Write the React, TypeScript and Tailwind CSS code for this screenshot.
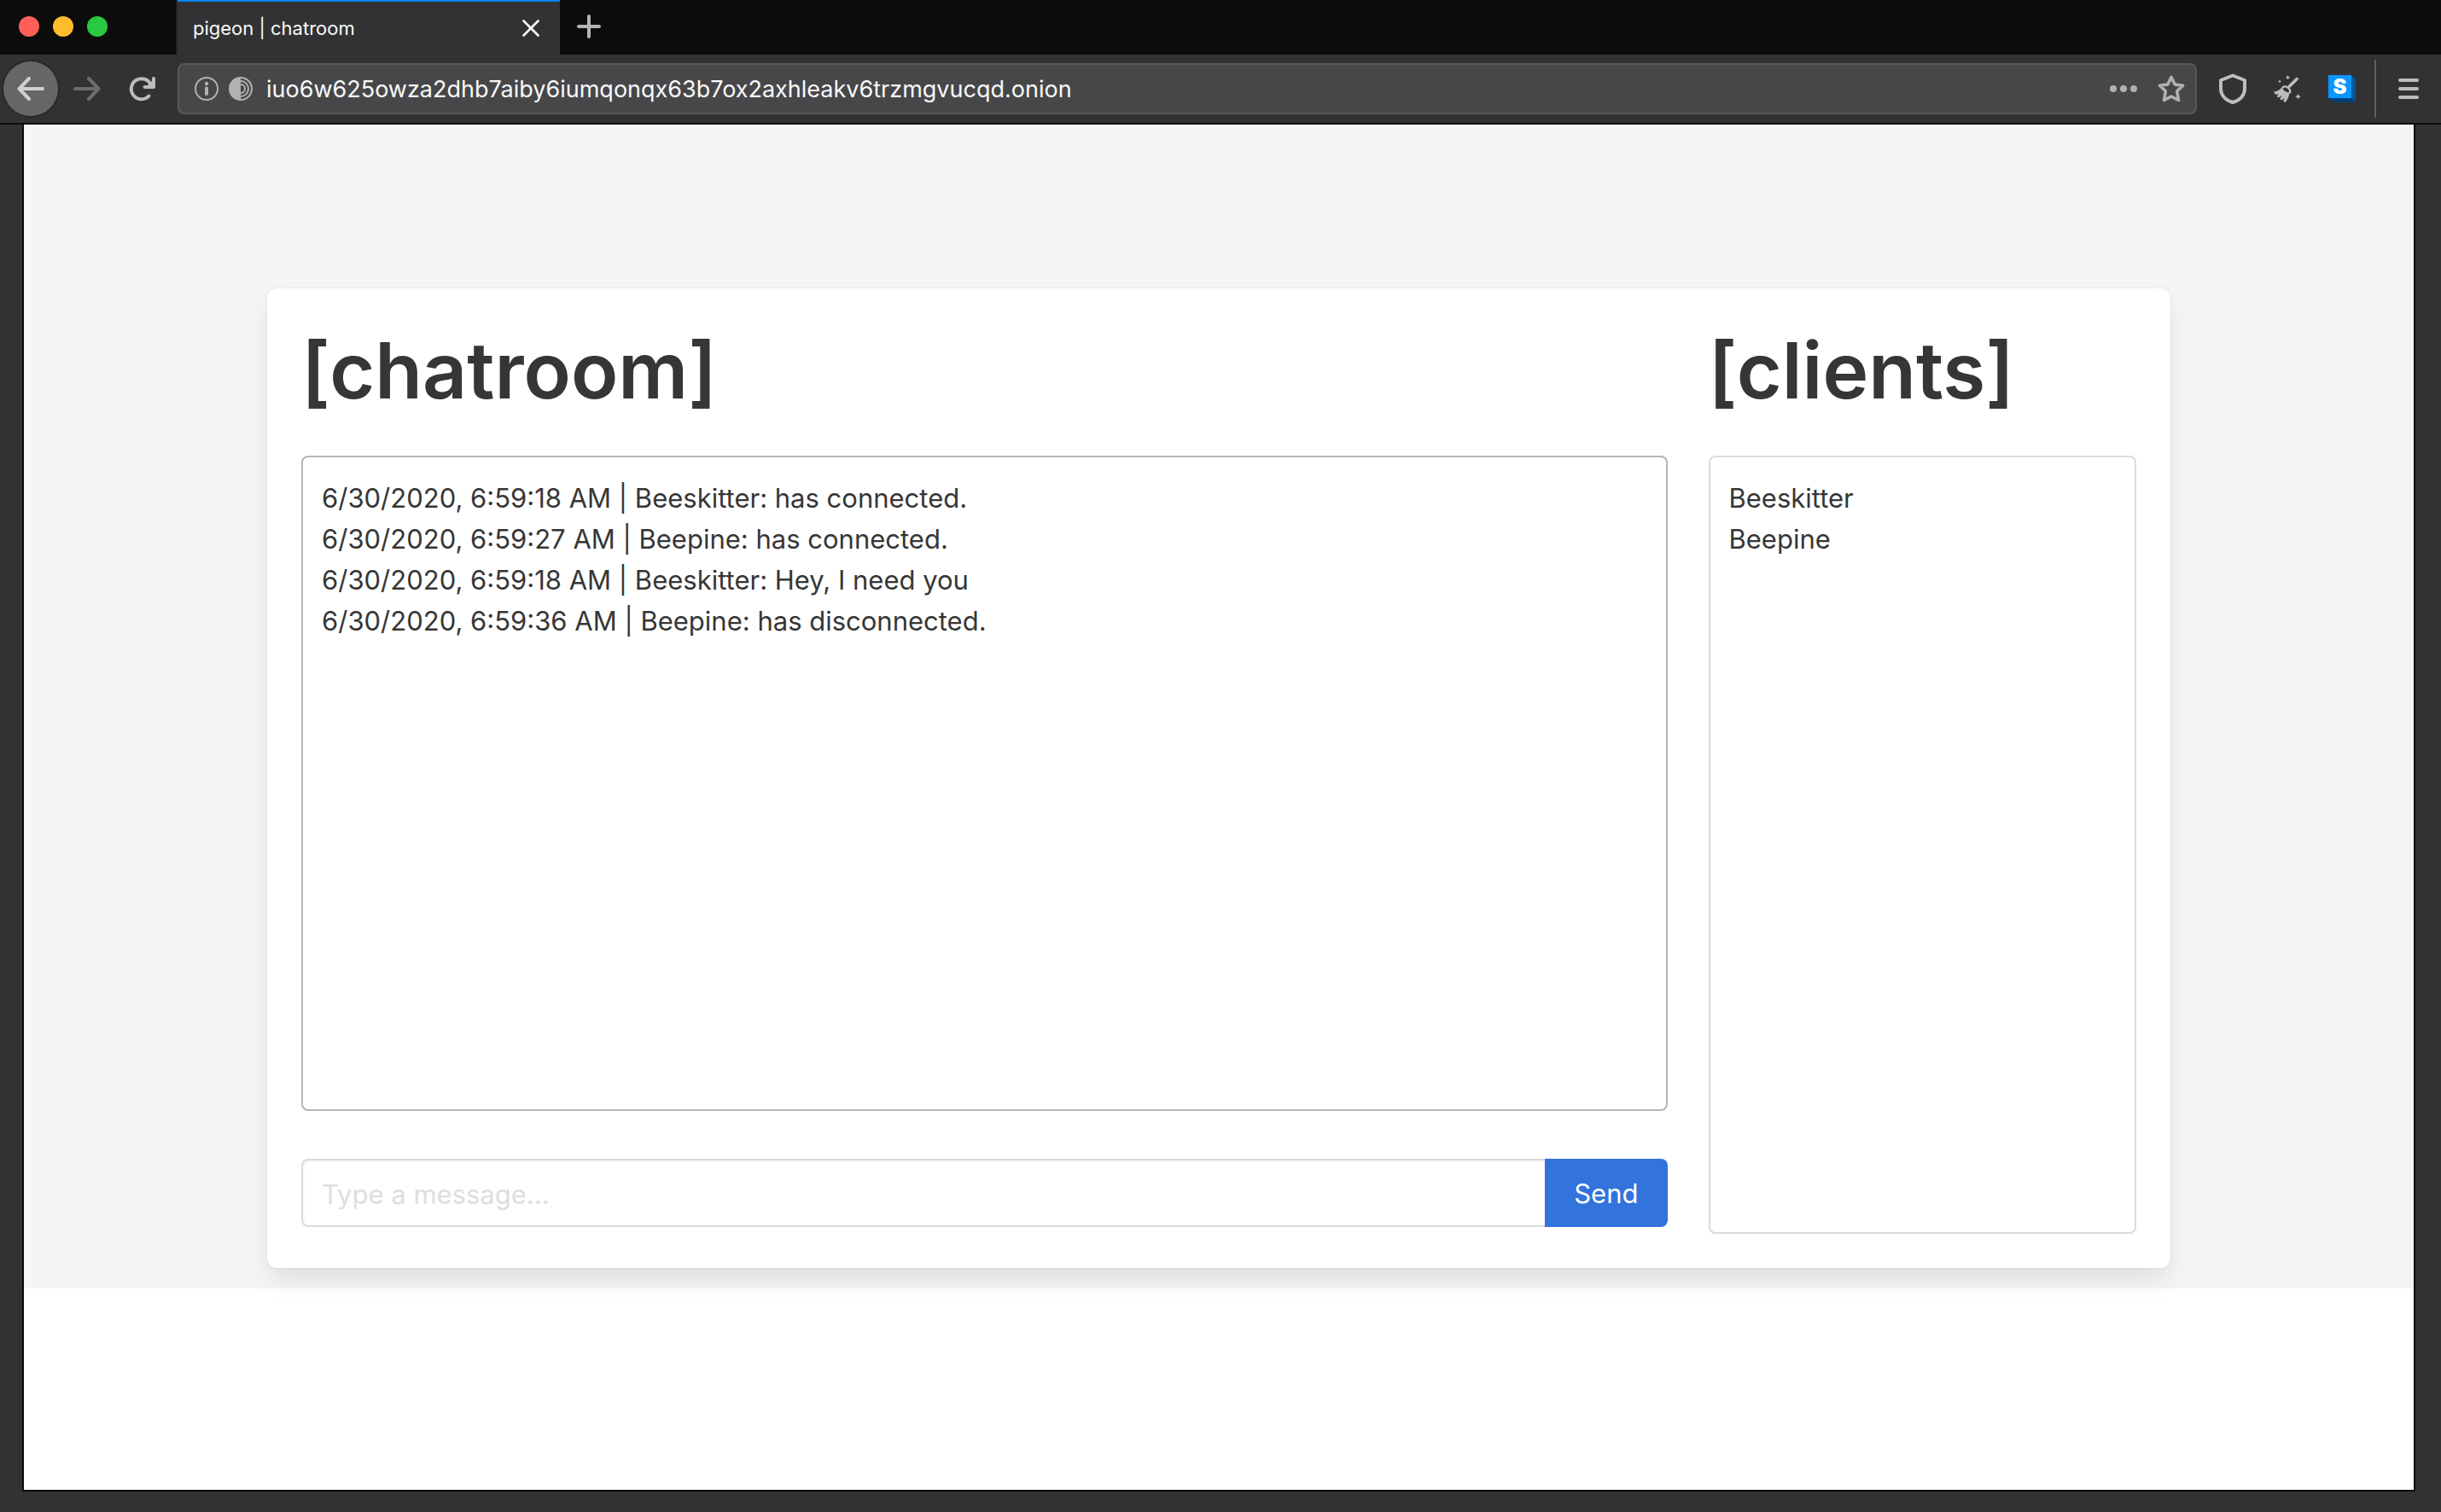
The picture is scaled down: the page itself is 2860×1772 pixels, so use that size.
import { useState } from "react";

const MESSAGES = [
  "6/30/2020, 6:59:18 AM | Beeskitter: has connected.",
  "6/30/2020, 6:59:27 AM | Beepine: has connected.",
  "6/30/2020, 6:59:18 AM | Beeskitter: Hey, I need you",
  "6/30/2020, 6:59:36 AM | Beepine: has disconnected.",
];

const CLIENTS = ["Beeskitter", "Beepine"];

function TabStrip() {
  return (
    <div className="flex h-16 items-stretch bg-[#0c0c0d]">
      <div className="flex w-52 shrink-0 items-center gap-4 border-r-2 border-[#232325] pb-0.5 pl-[22px]">
        <button type="button" aria-label="Close window" className="size-6 rounded-full bg-[#ff5f57]" />
        <button type="button" aria-label="Minimize window" className="size-6 rounded-full bg-[#ffbd2e]" />
        <button type="button" aria-label="Zoom window" className="size-6 rounded-full bg-[#28c940]" />
      </div>
      <div className="flex w-[448px] shrink-0 items-center justify-between border-t-2 border-[#0a84ff] bg-[#323234] pr-6 pl-[18px]">
        <span className="text-[22px] leading-7 text-[#f9f9fa]">pigeon | chatroom</span>
        <button type="button" aria-label="Close tab">
          <svg className="size-5" viewBox="0 0 20 20" fill="none" stroke="#f9f9fa" strokeWidth="2.6" strokeLinecap="round">
            <path d="M1.5 1.5l17 17M18.5 1.5l-17 17" />
          </svg>
        </button>
      </div>
      <button type="button" aria-label="New tab" className="flex items-center pb-0.5 pl-5">
        <svg className="size-7" viewBox="0 0 28 28" fill="none" stroke="#b4b4b5" strokeWidth="4" strokeLinecap="round">
          <path d="M14 2v24M2 14h24" />
        </svg>
      </button>
    </div>
  );
}

function OnionIcon() {
  return (
    <svg className="size-7" viewBox="0 0 28 28" fill="none" stroke="#b1b1b3" strokeWidth="2">
      <path d="M14 0a14 14 0 0 0 0 28z" fill="#b1b1b3" stroke="none" />
      <path d="M14 1a13 13 0 0 1 0 26M14 5a9 9 0 0 1 0 18M14 9a5 5 0 0 1 0 10" />
    </svg>
  );
}

function BroomIcon() {
  return (
    <svg className="size-8" viewBox="0 0 32 32" fill="#bdbdbe">
      <path d="M27.200 4.500L18.500 13" stroke="#bdbdbe" strokeWidth="3.600" strokeLinecap="round" />
      <path d="M10.500 14.500c3.500-3 9.500 1 8.500 6" fill="none" stroke="#bdbdbe" strokeWidth="2.400" strokeLinecap="round" />
      <path d="M9.500 14.500q2.500 5.500 9 6c-.6 4.500-2 8-4.800 11.500l-2.500-1.400 1.600-3.800-3.600 2.600-2-1.600 2.600-4-4.400 2.600-1.800-1.600 2.400-2.600-4 .6L0 19.500c4-.6 7-2 9.500-5z" />
      <path d="M16.500 0l.9 1.900 1.900.9-1.900.9-.9 1.900-.9-1.900-1.900-.9 1.900-.9zM7 5.400l.7 1.300 1.300.7-1.300.7L7 9.400l-.7-1.300L5 7.400l1.300-.7zM28.600 22l1.100 2.100 2.200 1.100-2.200 1.100-1.100 2.100-1.100-2.100-2.200-1.100 2.200-1.100z" />
    </svg>
  );
}

function Toolbar() {
  return (
    <div className="flex h-[80px] items-center bg-[#323234] pl-1">
      <button type="button" aria-label="Back" className="flex size-16 shrink-0 items-center justify-center rounded-full bg-[#666667] ring-2 ring-[#29292a]">
        <svg className="size-8" viewBox="0 0 32 32" fill="none" stroke="#d0d0d1" strokeWidth="4" strokeLinecap="round" strokeLinejoin="round">
          <path d="M30 16H3M14 4L2.500 16L14 28" />
        </svg>
      </button>
      <button type="button" aria-label="Forward" className="ml-[18px] shrink-0">
        <svg className="size-8" viewBox="0 0 32 32" fill="none" stroke="#6c6c6e" strokeWidth="4" strokeLinecap="round" strokeLinejoin="round">
          <path d="M2 16h27M18 4l11.500 12L18 28" />
        </svg>
      </button>
      <button type="button" aria-label="Reload" className="ml-8 shrink-0">
        <svg className="size-8" viewBox="0 0 32 32" fill="none" stroke="#bdbdbe" strokeWidth="4" strokeLinecap="round" strokeLinejoin="round">
          <path d="M24.500 24.500A12 12 0 1 1 27 12" />
          <path d="M30 4v10H19.500" />
          <path d="M28 7v7h-7z" fill="#bdbdbe" stroke="none" />
        </svg>
      </button>
      <div className="ml-[26px] flex h-[60px] min-w-0 flex-1 items-center rounded-lg border-2 border-[#59595b] bg-[#474749] pr-3 pl-[18px]">
        <button type="button" aria-label="Site information" className="shrink-0">
          <svg className="size-7" viewBox="0 0 28 28" fill="none" stroke="#b1b1b3">
            <circle cx="14" cy="14" r="13" strokeWidth="2" />
            <path d="M14 13.500v6.500" strokeWidth="4" strokeLinecap="round" />
            <circle cx="14" cy="8" r="2.200" fill="#b1b1b3" stroke="none" />
          </svg>
        </button>
        <button type="button" aria-label="Onion circuit" className="ml-3 shrink-0">
          <OnionIcon />
        </button>
        <input
          type="text"
          aria-label="Address"
          defaultValue="iuo6w625owza2dhb7aiby6iumqonqx63b7ox2axhleakv6trzmgvucqd.onion"
          className="ml-4 h-10 min-w-0 flex-1 bg-transparent pt-0.5 text-[27px] text-[#f9f9fa] outline-none"
        />
        <button type="button" aria-label="Page actions" className="shrink-0">
          <svg className="size-8" viewBox="0 0 32 32" fill="#b1b1b3">
            <circle cx="4" cy="16" r="4" />
            <circle cx="16" cy="16" r="4" />
            <circle cx="28" cy="16" r="4" />
          </svg>
        </button>
        <button type="button" aria-label="Bookmark this page" className="ml-6 shrink-0">
          <svg className="size-8" viewBox="0 0 32 32" fill="none" stroke="#b1b1b3" strokeWidth="3.600" strokeLinejoin="round">
            <path d="M16 2.500l4.200 8.500 9.400 1.200-6.900 6.500 1.800 10.800L16 25l-8.500 4.500 1.800-10.800-6.900-6.500 9.400-1.200z" />
          </svg>
        </button>
      </div>
      <button type="button" aria-label="Security level" className="ml-6 shrink-0">
        <svg className="size-9" viewBox="0 0 36 36" fill="none" stroke="#bdbdbe" strokeWidth="4" strokeLinejoin="round">
          <path d="M18 2.500L32 8v10c0 8-6 13.500-14 16C10 31.500 4 26 4 18V8z" />
        </svg>
      </button>
      <button type="button" aria-label="New identity" className="ml-[30px] shrink-0">
        <BroomIcon />
      </button>
      <button type="button" aria-label="S extension" className="ml-8 shrink-0">
        <span className="relative block size-8">
          <svg className="size-8" viewBox="0 0 32 32">
            <path d="M27 0l5 5v27l-5-5z" fill="#005a9e" />
            <path d="M0 27h27l5 5H6z" fill="#003f73" />
            <path d="M0 0h27v27H0z" fill="#0996ff" />
          </svg>
          <span className="absolute top-0 left-0 w-[27px] text-center text-[24px] leading-[27px] font-black text-white">S</span>
        </span>
      </button>
      <div className="ml-[22px] h-[68px] w-0.5 shrink-0 bg-[#5f5f61]" />
      <button type="button" aria-label="Open menu" className="mr-[26px] ml-[26px] shrink-0">
        <svg className="size-6" viewBox="0 0 24 24" fill="#bdbdbe">
          <rect width="24" height="4" rx="2" />
          <rect y="10" width="24" height="4" rx="2" />
          <rect y="20" width="24" height="4" rx="2" />
        </svg>
      </button>
    </div>
  );
}

function Chatroom() {
  const [draft, setDraft] = useState("");
  return (
    <section className="col-span-3">
      <h1 className="mb-11 text-[91px] leading-[112px] font-semibold">[chatroom]</h1>
      <div role="log" aria-label="Messages" className="min-h-[768px] rounded-lg border-2 border-[#b5b5b5] px-[22px] py-6">
        {MESSAGES.map((message) => (
          <p key={message}>{message}</p>
        ))}
      </div>
      <form className="mt-14 flex" onSubmit={(event) => event.preventDefault()}>
        <input
          type="text"
          aria-label="Message"
          placeholder="Type a message..."
          value={draft}
          onChange={(event) => setDraft(event.target.value)}
          className="h-20 min-w-0 flex-1 rounded-l-lg border-2 border-r-0 border-[#dbdbdb] px-[22px] pt-0.5 shadow-[inset_0_1px_4px_rgba(10,10,10,0.06)] outline-none placeholder:text-[#dedede]"
        />
        <button type="submit" className="h-20 rounded-r-lg bg-[#3273dc] px-[34px] pt-0.5 text-white">
          Send
        </button>
      </form>
    </section>
  );
}

function Clients() {
  return (
    <section className="flex flex-col">
      <h1 className="mb-11 text-[91px] leading-[112px] font-semibold">[clients]</h1>
      <ul className="min-h-[912px] flex-1 rounded-lg border-2 border-[#dbdbdb] px-[22px] py-6">
        {CLIENTS.map((name) => (
          <li key={name}>{name}</li>
        ))}
      </ul>
    </section>
  );
}

export default function App() {
  return (
    <div className="flex min-h-screen flex-col bg-[#323234] font-['Inter',sans-serif]">
      <TabStrip />
      <Toolbar />
      <div className="h-0.5 bg-[#0c0c0d]" />
      <main className="mr-[30px] mb-6 ml-[26px] flex-1 border-x-2 border-b-2 border-[#0c0c0d] bg-white text-[31px] leading-[48px] text-[#363636]">
        <div className="bg-[#f5f5f5] px-6 pt-48 pb-6">
          <div className="mx-auto grid max-w-[2230px] grid-cols-4 gap-12 rounded-xl bg-white p-10 shadow-[0_16px_32px_-4px_rgba(10,10,10,0.1),0_0_0_2px_rgba(10,10,10,0.02)]">
            <Chatroom />
            <Clients />
          </div>
        </div>
      </main>
    </div>
  );
}
